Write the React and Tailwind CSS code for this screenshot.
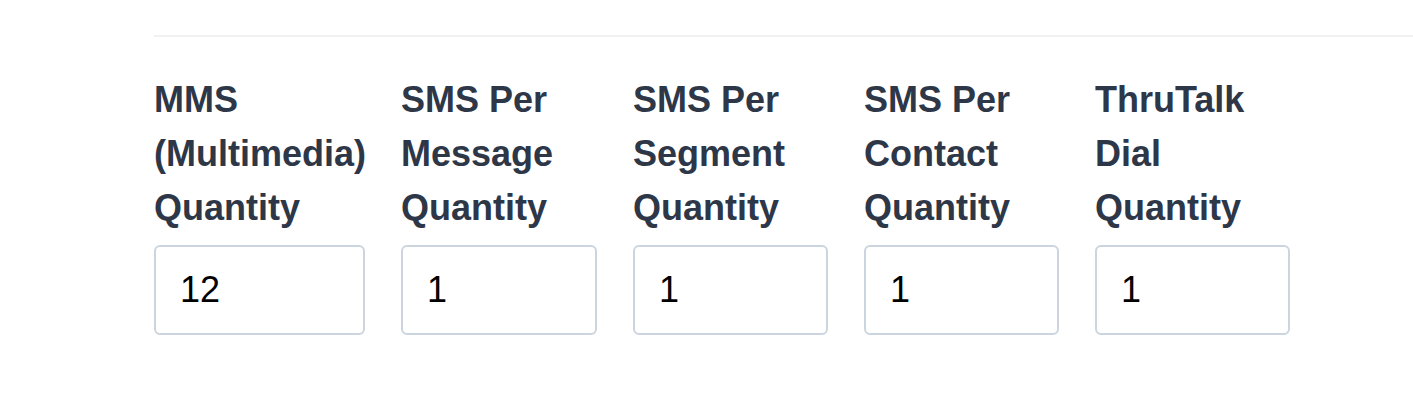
import React from 'react'

const fields = [
    { label: 'MMS (Multimedia) Quantity', value: '12', width: 'w-[211px]' },
    { label: 'SMS Per Message Quantity', value: '1', width: 'w-[196px]' },
    { label: 'SMS Per Segment Quantity', value: '1', width: 'w-[195px]' },
    { label: 'SMS Per Contact Quantity', value: '1', width: 'w-[195px]' },
    { label: 'ThruTalk Dial Quantity', value: '1', width: 'w-[195px]' },
]

export default function App() {
    return (
        <div className="min-h-[405px] bg-white pl-[154px] pt-[35px] font-['Liberation_Sans',Arial,sans-serif]">
            <div className="border-t-2 border-[#f0f1f3] pt-9">
                <div className="flex gap-9">
                    {fields.map(f => (
                        <div key={f.label} className={`${f.width} shrink-0`}>
                            <label className="block text-[36px] font-bold leading-[54px] text-[#2d3748]">
                                {f.label}
                            </label>
                            <input
                                type="text"
                                defaultValue={f.value}
                                className="mt-[10px] h-[90px] w-full rounded-md border-2 border-[#cbd5e0] bg-white px-6 text-[36px] text-black focus:outline-none"
                            />
                        </div>
                    ))}
                </div>
            </div>
        </div>
    )
}
